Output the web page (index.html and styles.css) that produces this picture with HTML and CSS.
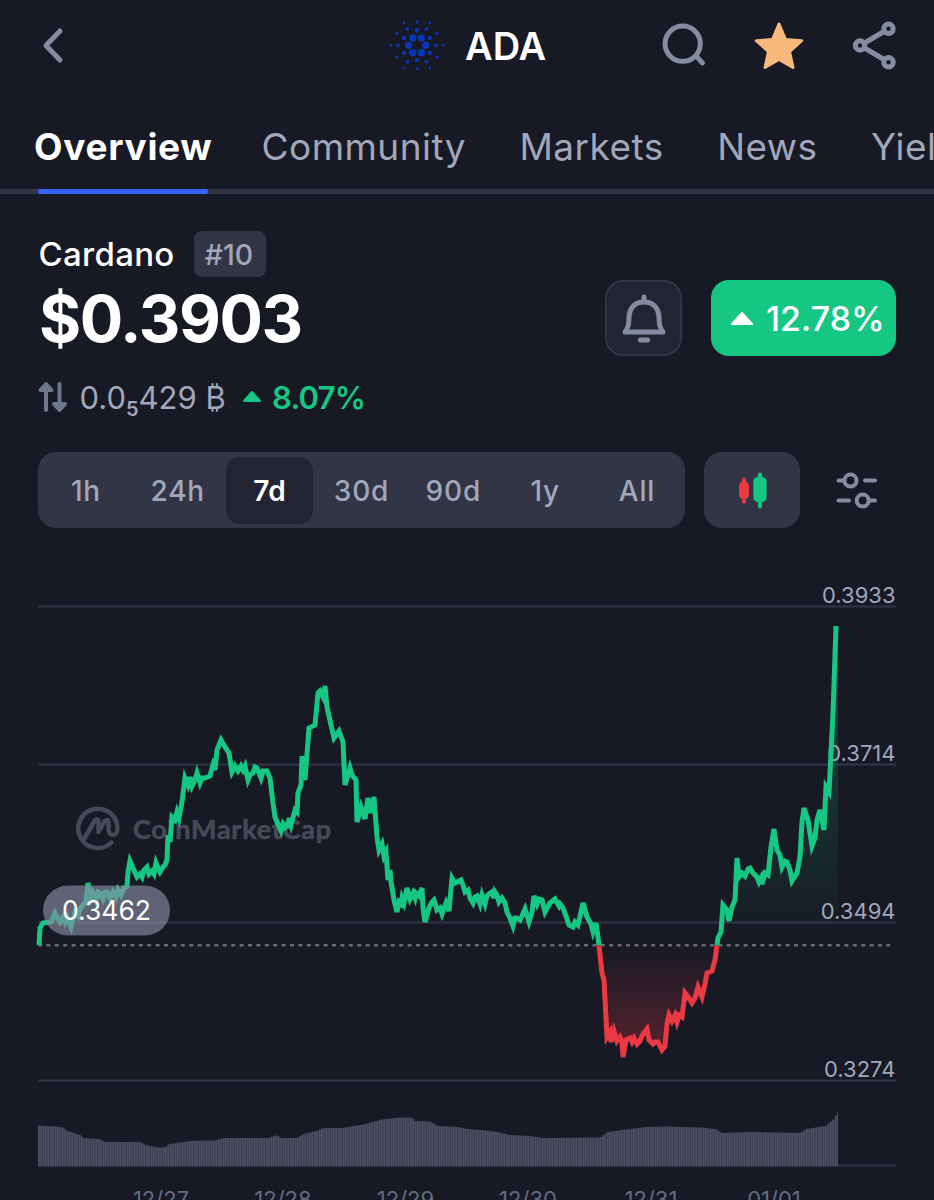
FILE: index.html
```html
<!DOCTYPE html>
<html lang="en">

<head>
    <meta charset="UTF-8">
    <meta name="viewport" content="width=device-width, initial-scale=1.0">
    <title>ADA - Cardano</title>
    <link rel="stylesheet" href="styles.css">
</head>

<body>

    <!-- Top bar -->
    <header class="topbar">
        <svg class="icon-back" width="24" height="40" viewBox="0 0 24 40">
            <path d="M19 5 L5 19.500 L19 34" />
        </svg>
        <div class="coin-title">
            <svg class="coin-logo" id="coin-logo" width="56" height="56" viewBox="-28 -27.300 56 56"></svg>
            <span>ADA</span>
        </div>
        <div class="actions">
            <svg class="line-icon" width="48" height="48" viewBox="0 0 48 48">
                <circle cx="22.700" cy="21.700" r="17.600" />
                <path d="M36 34 L42.500 41" />
            </svg>
            <svg class="star-icon" width="52" height="52" viewBox="0 0 52 52">
                <path d="M26 4 L32.500 19.500 L48.700 20.700 L36.500 31.600 L40 47.500 L26 39.500 L12 47.500 L15.500 31.600 L3.300 20.700 L19.500 19.500 Z" />
            </svg>
            <svg class="line-icon" width="48" height="52" viewBox="0 0 48 52">
                <circle cx="10" cy="25.500" r="4.700" />
                <circle cx="38.500" cy="8.800" r="4.700" />
                <circle cx="38.500" cy="42.300" r="4.700" />
                <path d="M14.500 23 L34 11.500 M14.500 28 L34 39.500" />
            </svg>
        </div>
    </header>

    <!-- Tabs -->
    <nav class="tabs">
        <a class="tab active">Overview</a>
        <a class="tab">Community</a>
        <a class="tab">Markets</a>
        <a class="tab">News</a>
        <a class="tab">Yield</a>
    </nav>

    <!-- Price -->
    <section class="summary">
        <div class="quote">
            <div class="name-row">
                <span class="name">Cardano</span>
                <span class="rank">#10</span>
            </div>
            <div class="price">$0.3903</div>
            <div class="btc-row">
                <svg class="swap-icon" width="30" height="32" viewBox="0 0 30 32">
                    <path d="M8 29 V5 M2.500 9 L8 3 L13.500 9 Z M21.500 3 V27 M16 23 L21.500 29 L27 23 Z" />
                </svg>
                <span class="btc-price">0.0<span class="small-digit">5</span>429 ₿</span>
                <svg class="up green" width="20" height="14" viewBox="0 0 20 14">
                    <path d="M10 2 L18 11 H2 Z" />
                </svg>
                <span class="btc-change">8.07%</span>
            </div>
        </div>
        <div class="bell-button">
            <svg class="line-icon" width="46" height="52" viewBox="0 0 46 52">
                <path d="M23 5 V9 M4 40 H42 C38.500 36 38 32 38 26 C38 16 32 10 23 10 C14 10 8 16 8 26 C8 32 7.500 36 4 40 Z M19.500 48 H26.500" />
            </svg>
        </div>
        <div class="change-button">
            <svg class="up" width="24" height="16" viewBox="0 0 24 16">
                <path d="M12 3 L22 14 H2 Z" />
            </svg>
            <span>12.78%</span>
        </div>
    </section>

    <!-- Range picker -->
    <section class="toolbar">
        <div class="ranges">
            <span>1h</span>
            <span>24h</span>
            <span class="selected">7d</span>
            <span>30d</span>
            <span>90d</span>
            <span>1y</span>
            <span>All</span>
        </div>
        <div class="candle-button">
            <svg width="32" height="40" viewBox="0 0 32 40">
                <g class="candle-down">
                    <rect x="6.200" y="7.500" width="3.600" height="26" rx="1.500" />
                    <rect x="3" y="11.500" width="10" height="17.500" rx="4.500" />
                </g>
                <g class="candle-up">
                    <rect x="22" y="2.700" width="4" height="35.600" rx="1.500" />
                    <rect x="17.400" y="7" width="13.200" height="25" rx="4.500" />
                </g>
            </svg>
        </div>
        <svg class="settings-icon" width="44" height="40" viewBox="0 0 44 40">
            <circle cx="16.500" cy="10.600" r="6" />
            <circle cx="28.700" cy="30.600" r="6" />
            <path d="M4.500 10.600 H10 M31 10.600 H41 M4.500 30.600 H15 M35 30.600 H41" />
        </svg>
    </section>

    <!-- Chart -->
    <section class="chart">
        <svg width="934" height="640" viewBox="0 560 934 640">
            <defs>
                <linearGradient id="green-fade" gradientUnits="userSpaceOnUse" x1="0" y1="627" x2="0" y2="945">
                    <stop offset="0" stop-color="#16c784" stop-opacity="0.3" />
                    <stop offset="1" stop-color="#16c784" stop-opacity="0" />
                </linearGradient>
                <linearGradient id="red-fade" gradientUnits="userSpaceOnUse" x1="0" y1="945" x2="0" y2="1058">
                    <stop offset="0" stop-color="#ea3943" stop-opacity="0" />
                    <stop offset="1" stop-color="#ea3943" stop-opacity="0.32" />
                </linearGradient>
                <clipPath id="above"><rect x="0" y="560" width="934" height="385.500" /></clipPath>
                <clipPath id="below"><rect x="0" y="945.500" width="934" height="140" /></clipPath>
                <pattern id="bars" patternUnits="userSpaceOnUse" x="38" y="0" width="2.400" height="10">
                    <rect width="2.400" height="10" fill="#373b4c" />
                    <rect width="1.300" height="10" fill="#4f5366" />
                </pattern>
            </defs>

            <path class="grid" d="M38 606.500 H896 M38 764.500 H896 M38 922.500 H896 M38 1080.500 H896 M38 1165.500 H896" />

            <g class="watermark">
                <path d="M111.500 842.500 A19.600 19.600 0 1 1 117.500 828 C117.500 837 108.500 837 108.500 829 V823 C108.500 819 105.500 819 103.500 823 L98.500 832 V822 C98.500 819 96 818 94 822 L84 839" />
                <text x="133" y="839" textLength="198">CoinMarketCap</text>
            </g>

            <g class="axis">
                <text x="895.500" y="602.700">0.3933</text>
                <text x="895.500" y="760.700">0.3714</text>
                <text x="895.500" y="918.700">0.3494</text>
                <text x="895.500" y="1076.700">0.3274</text>
            </g>

            <path id="green-area" fill="url(#green-fade)" />
            <path id="red-area" fill="url(#red-fade)" clip-path="url(#below)" />
            <path class="open-line" d="M38 945.300 H890" />
            <path id="line-up" class="line up-line" clip-path="url(#above)" />
            <path id="line-down" class="line down-line" clip-path="url(#below)" />

            <rect class="open-pill" x="43" y="885.500" width="127" height="50" rx="25" />
            <text class="open-price" x="106.500" y="919.500">0.3462</text>

            <path id="volume" fill="url(#bars)" />

            <g class="dates">
                <text x="161" y="1206.500">12/27</text>
                <text x="283" y="1206.500">12/28</text>
                <text x="405.500" y="1206.500">12/29</text>
                <text x="528" y="1206.500">12/30</text>
                <text x="651" y="1206.500">12/31</text>
                <text x="774" y="1206.500">01/01</text>
            </g>
        </svg>
    </section>

    <script src="chart.js"></script>

</body>

</html>
```
FILE: styles.css
```css
body {
    margin: 0;
    width: 934px;
    height: 1200px;
    overflow: hidden;
    background-color: #171924;
    color: #fff;
    font-family: Inter, sans-serif;
}

svg {
    display: block;
    flex: none;
}

.line-icon,
.icon-back,
.settings-icon {
    fill: none;
    stroke: #858ca2;
    stroke-width: 5;
    stroke-linecap: round;
    stroke-linejoin: round;
}

.settings-icon {
    stroke-width: 4;
}

/* Top bar */
.topbar {
    display: flex;
    align-items: center;
    height: 92px;
    padding-left: 41px;
}

.coin-title {
    display: flex;
    align-items: center;
    gap: 20px;
    margin-left: 324px;
    width: 270.5px;
    font-size: 38px;
    font-weight: 600;
}

.coin-logo {
    fill: #0a36b4;
}

.actions {
    display: flex;
    align-items: center;
}

.star-icon {
    margin: 0 45.5px 0 45px;
    fill: #f7b97c;
    stroke: #f7b97c;
    stroke-width: 3;
    stroke-linejoin: round;
}

/* Tabs */
.tabs {
    display: flex;
    height: 97px;
    padding-left: 34px;
    border-bottom: 5px solid #323546;
    white-space: nowrap;
}

.tab {
    position: relative;
    margin-right: 53.5px;
    font-size: 37px;
    line-height: 109px;
    letter-spacing: 0.45px;
    color: #a1a7bb;
}

.tab.active {
    margin-right: 49px;
    font-weight: 700;
    letter-spacing: 0.7px;
    color: #fff;
}

.tab.active::after {
    content: "";
    position: absolute;
    left: 4px;
    bottom: -5px;
    width: 170px;
    height: 5px;
    border-radius: 2px;
    background-color: #3861fb;
}

/* Price */
.summary {
    display: flex;
    height: 258px;
    padding: 0 38px;
}

.quote {
    width: 567px;
    padding-top: 37px;
}

.name-row {
    display: flex;
    align-items: center;
    height: 46px;
}

.name {
    width: 156px;
    font-size: 33px;
    font-weight: 500;
    letter-spacing: 0.3px;
    text-indent: 0.5px;
}

.rank {
    width: 72px;
    height: 46px;
    border-radius: 8px;
    background-color: #323546;
    color: #a1a7bb;
    font-size: 28.5px;
    font-weight: 500;
    line-height: 47px;
    text-align: center;
    text-indent: -2px;
}

.price {
    height: 82px;
    font-size: 64.5px;
    font-weight: 700;
    line-height: 84px;
    letter-spacing: -1.4px;
    text-indent: 1px;
}

.btc-row {
    display: flex;
    align-items: center;
    height: 76px;
}

.swap-icon {
    fill: #6f778c;
    stroke: #6f778c;
    stroke-width: 4;
    stroke-linecap: round;
    stroke-linejoin: round;
}

.btc-price {
    margin-left: 11.5px;
    width: 162.5px;
    color: #a1a7bb;
    font-size: 31px;
    white-space: nowrap;
}

.small-digit {
    position: relative;
    top: 7px;
    font-size: 20px;
    font-weight: 600;
}

.up {
    fill: #fff;
    stroke: #fff;
    stroke-width: 2;
    stroke-linejoin: round;
}

.green {
    fill: #16c784;
    stroke: #16c784;
}

.btc-change {
    margin-left: 10px;
    color: #16c784;
    font-size: 31px;
    font-weight: 600;
    letter-spacing: -0.8px;
}

.bell-button {
    display: flex;
    align-items: center;
    justify-content: center;
    box-sizing: border-box;
    width: 77px;
    height: 76px;
    margin: 86px 29px 0 0;
    border: 2px solid #323546;
    border-radius: 18px;
    background-color: #222531;
}

.change-button {
    display: flex;
    align-items: center;
    width: 185px;
    height: 76px;
    margin-top: 86px;
    padding-left: 19px;
    box-sizing: border-box;
    border-radius: 18px;
    background-color: #16c784;
    font-size: 34px;
    font-weight: 500;
}

.change-button span {
    margin-left: 12px;
}

/* Range picker */
.toolbar {
    display: flex;
    align-items: center;
    height: 76px;
    padding-left: 38px;
}

.ranges {
    display: flex;
    align-items: center;
    justify-content: space-around;
    box-sizing: border-box;
    width: 647px;
    height: 76px;
    padding: 0 2px;
    border-radius: 18px;
    background-color: #323546;
}

.ranges span {
    width: 87px;
    height: 67px;
    border-radius: 14px;
    color: #a1a7bb;
    font-size: 28px;
    font-weight: 500;
    line-height: 69px;
    letter-spacing: 0.8px;
    text-align: center;
}

.ranges .selected {
    background-color: #222531;
    color: #fff;
    font-weight: 600;
    letter-spacing: 0.3px;
}

.candle-button {
    display: flex;
    align-items: center;
    justify-content: center;
    width: 96px;
    height: 76px;
    margin: 0 34px 0 19px;
    border-radius: 18px;
    background-color: #323546;
}

.candle-down {
    fill: #ea3943;
}

.candle-up {
    fill: #16c784;
}

/* Chart */
.chart {
    margin-top: 32px;
}

.grid {
    stroke: #323546;
    stroke-width: 2;
}

.watermark path {
    fill: none;
    stroke: #464957;
    stroke-width: 4.5;
    stroke-linecap: round;
    stroke-linejoin: round;
}

.watermark text {
    fill: #464957;
    font-family: Lato, sans-serif;
    font-size: 27px;
    font-weight: 700;
    stroke: #464957;
    stroke-width: 0.6px;
}

.axis text {
    fill: #a1a7bb;
    font-size: 22px;
    text-anchor: end;
}

.open-line {
    stroke: #646878;
    stroke-width: 2.5;
    stroke-dasharray: 4 4.4;
}

.line {
    fill: none;
    stroke-width: 5;
    stroke-linejoin: miter;
}

.up-line {
    stroke: #16c784;
}

.down-line {
    stroke: #ea3943;
}

.open-pill {
    fill: #858ca2;
    fill-opacity: 0.65;
}

.open-price {
    fill: #fff;
    font-size: 26.5px;
    text-anchor: middle;
}

.dates text {
    fill: #646b80;
    font-size: 22px;
    text-anchor: middle;
}
```
FILE: chart.js
```js
// Price points, x y
const price = `39,945 40,928 43,923 51,922 55,913 58,919 60,922 63,917 65,922 67,917 71,927 75,912 78,916 80,909 83,905 86,902 88,883 91,898 93,893
96,900 98,892 100,893 103,899 105,892 107,892 110,898 113,892 116,897 118,890 121,895 124,888 127,886 128,872 130,861 133,868 137,877
140,874 142,877 144,870 147,867 149,874 152,871 154,874 156,863 158,868 160,872 163,867 165,865 167,860 168,835 170,842 172,817
175,820 177,812 179,818 182,802 185,778 188,785 190,777 192,786 195,780 197,773 200,783 202,778 205,778 210,776 213,765 215,770 217,750
221,740 225,747 229,753 232,772 235,766 238,771 241,766 243,770 245,766 248,780 250,775 253,773 255,767 257,768 261,778 263,771 267,771
270,778 273,803 275,817 277,822 281,831 283,824 285,827 287,824 288,828 289,818 291,825 295,810 297,812 298,793 301,785 302,756 305,780
309,728 315,725 318,693 320,691 323,697 325,686 327,707 331,725 334,738 339,731 343,742 345,785 348,775 350,768 352,775
356,780 357,822 361,807 365,819 368,798 371,813 374,797 377,837 379,850 382,844 384,856 386,852 388,880 390,870 391,882 394,900
397,912 399,902 401,904 402,898 404,903 407,888 410,899 413,893 415,898 416,893 419,896 422,888 423,908 425,922 429,908 432,902 434,900 437,910 440,908 442,914
446,903 449,911 452,878 455,883 461,880 463,885 465,892 468,890 470,898 473,903 475,897 477,896 480,904 482,895 485,904 487,896 489,894 492,892 494,898
495,892 497,895 499,902 502,898 505,903 507,912 510,918 513,926 515,918 517,918 520,920 522,916 525,909 529,922 532,912 534,896 537,904 539,899 542,900 545,912
550,903 555,899 559,906 560,904 563,908 566,916 569,925 573,927 575,922 578,925 583,903 587,917 591,924 593,932 596,923 598,937
599,946 602,973 604,980 607,1037 610,1032 611,1042 614,1031 617,1041 620,1037 622,1042 623,1057 626,1040 630,1038
632,1042 634,1038 637,1044 640,1041 642,1036 644,1033 647,1029 649,1040 653,1044 655,1042 658,1042 662,1050 665,1046 667,1024 669,1015 672,1021
675,1015 677,1022 679,1015 682,1017 685,993 688,997 692,1003 695,998 698,987 702,997 705,984 707,973 712,971 715,960
717,945 718,938 721,932 723,905 727,910 729,921 732,907 735,900 737,858 739,877 742,873 745,876 748,869 750,868 753,873
757,877 759,882 761,878 762,884 765,873 768,875 771,847 774,829 777,850 780,855 782,867 785,861 787,862 790,870 792,881 797,873
800,857 802,822 804,808 808,820 812,846 815,838 817,820 820,810 824,830 826,787 829,792 831,753 833,713 836,626`
    .split(/\s+/).map(p => p.split(",").map(Number));

const line = "M" + price.map(p => p.join(" ")).join("L");
document.getElementById("line-up").setAttribute("d", line);
document.getElementById("line-down").setAttribute("d", line);

const last = price.filter(p => p[0] >= 717);
document.getElementById("green-area").setAttribute("d", "M" + last.map(p => p.join(" ")).join("L") + "L838 627V945H717Z");
document.getElementById("red-area").setAttribute("d", line + "V945H39Z");

// Volume, one step every 2.4px
const volume = [[38, 1125.5], [62, 1127], [68, 1131], [80, 1135], [84, 1138], [99, 1139], [105, 1142], [140, 1142],
    [146, 1145], [158, 1147.5], [166, 1147], [168, 1144.5], [190, 1141], [214, 1140.5], [225, 1138], [268, 1138],
    [278, 1135], [281, 1138], [298, 1138], [304, 1134], [316, 1131], [324, 1128], [342, 1128], [366, 1124], [382, 1119.5],
    [400, 1117.5], [411, 1117.5], [416, 1121], [430, 1121.5], [438, 1126], [458, 1127], [467, 1129], [492, 1131],
    [510, 1135], [530, 1136], [543, 1138], [600, 1137.5], [608, 1132], [630, 1129], [646, 1127], [668, 1126.5],
    [700, 1127.5], [716, 1129], [722, 1133], [752, 1132], [800, 1133], [806, 1129], [826, 1126], [834, 1119], [838, 1112]];

function volumeAt(x) {
    for (let i = 1; i < volume.length; i++) {
        const a = volume[i - 1];
        const b = volume[i];
        if (x <= b[0]) {
            return a[1] + (b[1] - a[1]) * (x - a[0]) / (b[0] - a[0]);
        }
    }
    return volume[volume.length - 1][1];
}

let d = "M38 1166.5";
for (let x = 38; x < 837.5; x += 2.4) {
    d += "V" + volumeAt(x + 1.2).toFixed(1) + "H" + Math.min(x + 2.4, 838).toFixed(1);
}
document.getElementById("volume").setAttribute("d", d + "V1166.5Z");

// Cardano dots: radius of ring, dot size, count, start angle
const rings = [[8.6, 3.7, 6, 0], [14.8, 2.2, 6, 30], [18.9, 1.9, 6, 0], [23.3, 1.7, 6, 30], [25.9, 1.3, 6, 0]];
let dots = "";
rings.forEach(([radius, size, count, start]) => {
    for (let i = 0; i < count; i++) {
        const angle = (start + i * 360 / count) * Math.PI / 180;
        dots += `<circle cx="${(radius * Math.cos(angle)).toFixed(1)}" cy="${(radius * Math.sin(angle)).toFixed(1)}" r="${size}" />`;
    }
});
document.getElementById("coin-logo").innerHTML = dots;
```
